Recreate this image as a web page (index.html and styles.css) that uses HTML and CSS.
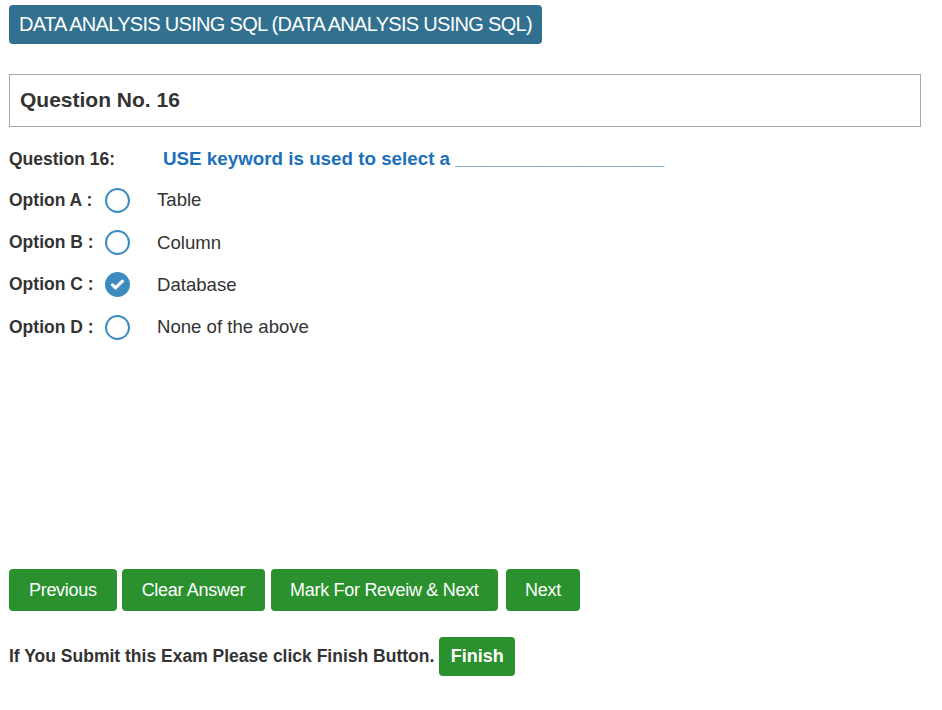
FILE: index.html
```html
<!DOCTYPE html>
<html>
<head>
<meta charset="utf-8">
<link rel="stylesheet" href="styles.css">
</head>
<body>
<div class="page">
  <div class="subject">DATA ANALYSIS USING SQL (DATA ANALYSIS USING SQL)</div>
  <div class="qbox">Question No. 16</div>
  <div class="qrow">
    <span class="qlabel">Question 16:</span>
    <span class="qtext">USE keyword is used to select a ____________________</span>
  </div>
  <div class="opt">
    <span class="olabel">Option A :</span>
    <span class="radio"></span>
    <span class="otext">Table</span>
  </div>
  <div class="opt">
    <span class="olabel">Option B :</span>
    <span class="radio"></span>
    <span class="otext">Column</span>
  </div>
  <div class="opt">
    <span class="olabel">Option C :</span>
    <span class="radio checked"><svg viewBox="0 0 24 24" width="17" height="17"><path d="M5 12.5l4.2 4.2L19 7.2" fill="none" stroke="#fff" stroke-width="4.4" stroke-linecap="round" stroke-linejoin="round"/></svg></span>
    <span class="otext">Database</span>
  </div>
  <div class="opt">
    <span class="olabel">Option D :</span>
    <span class="radio"></span>
    <span class="otext">None of the above</span>
  </div>
  <div class="actions">
    <button class="btn">Previous</button>
    <button class="btn">Clear Answer</button>
    <button class="btn mark">Mark For Reveiw &amp; Next</button>
    <button class="btn next">Next</button>
  </div>
  <div class="finish-row">
    <span class="finish-text">If You Submit this Exam Please click Finish Button.</span>
    <button class="btn finish">Finish</button>
  </div>
</div>
</body>
</html>
```
FILE: styles.css
```css
* { box-sizing: border-box; }
body {
  margin: 0;
  font-family: "Liberation Sans", Arial, sans-serif;
  color: #333;
  background: #fff;
}
.page {
  padding: 5px 21px 0 9px;
  display: flex;
  flex-direction: column;
  align-items: flex-start;
}
.subject {
  background: #32708f;
  color: #fff;
  font-size: 20px;
  letter-spacing: -0.7px;
  height: 39px;
  line-height: 38px;
  padding: 0 10px;
  border-radius: 4px;
  white-space: nowrap;
}
.qbox {
  margin-top: 30px;
  align-self: stretch;
  border: 1px solid #aaa6a6;
  height: 53px;
  line-height: 50px;
  padding-left: 10px;
  font-size: 21px;
  font-weight: bold;
  color: #333;
}
.qrow {
  margin-top: 20px;
  display: flex;
  align-items: center;
  height: 24px;
}
.qlabel {
  width: 154px;
  font-size: 17.5px;
  font-weight: bold;
}
.qtext {
  color: #1c6fba;
  font-size: 18.8px;
  font-weight: bold;
}
.opt {
  display: flex;
  align-items: center;
  height: 26px;
  margin-top: 16.33px;
}
.olabel {
  width: 96px;
  font-size: 17.5px;
  font-weight: bold;
}
.radio {
  width: 25px;
  height: 25px;
  border: 2px solid #3d8cc0;
  border-radius: 50%;
  display: flex;
  align-items: center;
  justify-content: center;
  margin-right: 27px;
}
.radio.checked { background: #3d8cc0; }
.otext { font-size: 18.6px; color: #333; }
.actions {
  margin-top: 229px;
  display: flex;
  gap: 5px;
}
.btn {
  font-family: "Liberation Sans", Arial, sans-serif;
  background: #2a912e;
  color: #fff;
  border: none;
  border-radius: 4px;
  height: 42px;
  padding: 0 20px;
  font-size: 18px;
  letter-spacing: -0.3px;
}
.actions .mark { margin-left: 1px; padding: 0 19px; }
.actions .next { margin-left: 3px; padding: 0 19.5px; }
.finish-row {
  margin-top: 26px;
  display: flex;
  align-items: center;
  gap: 5px;
}
.finish-text { font-size: 17.5px; font-weight: bold; }
.btn.finish {
  height: 39px;
  padding: 0 11.5px;
  font-weight: bold;
  letter-spacing: 0;
}
```
